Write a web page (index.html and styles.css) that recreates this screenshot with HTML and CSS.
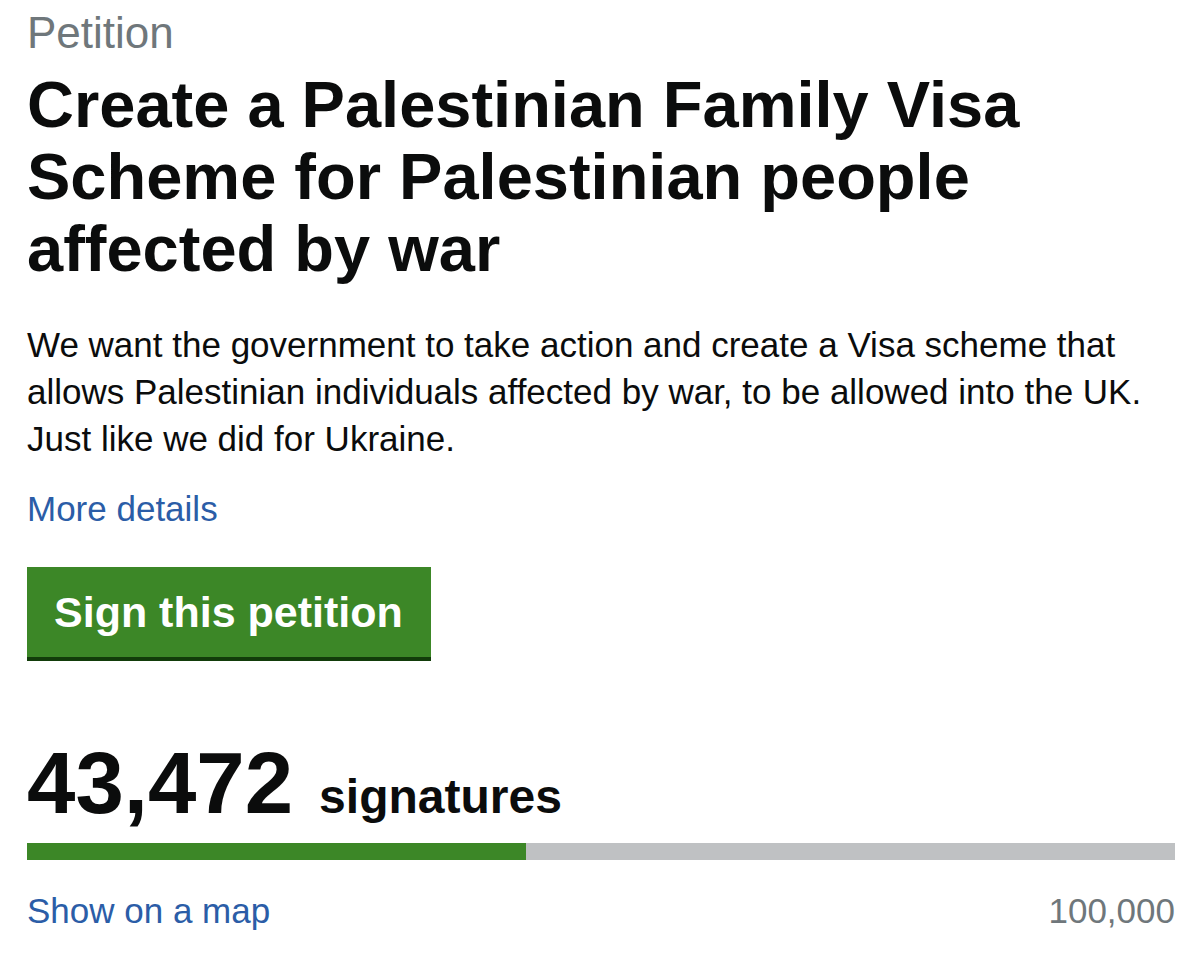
FILE: index.html
```html
<!DOCTYPE html>
<html lang="en">
<head>
<meta charset="utf-8">
<title>Petition</title>
<link rel="stylesheet" href="styles.css">
</head>
<body>
<main class="page">
  <span class="caption">Petition</span>
  <h1 class="title">Create a Palestinian Family Visa Scheme for Palestinian people affected by war</h1>
  <p class="action">We want the government to take action and create a Visa scheme that allows Palestinian individuals affected by war, to be allowed into the UK. Just like we did for Ukraine.</p>
  <a class="link details" href="#">More details</a>
  <div class="button-row"><a class="button" href="#">Sign this petition</a></div>
  <div class="count"><span class="count-number">43,472</span><span class="count-label">signatures</span></div>
  <div class="progress"><div class="progress-fill" style="width: 43.472%"></div></div>
  <div class="progress-foot">
    <a class="link" href="#">Show on a map</a>
    <span class="threshold">100,000</span>
  </div>
</main>
</body>
</html>
```

FILE: styles.css
```css
html, body {
  margin: 0;
  padding: 0;
  background: #ffffff;
}

body {
  font-family: "Liberation Sans", Arial, Helvetica, sans-serif;
  color: #0b0c0c;
}

.page {
  display: flex;
  flex-direction: column;
  align-items: flex-start;
  padding: 8px 25px 0 27px;
}

.caption {
  display: block;
  font-size: 44px;
  line-height: 50px;
  color: #6f777b;
}

.title {
  margin: 11px 0 0;
  font-size: 65px;
  line-height: 72px;
  font-weight: 700;
  max-width: 1060px;
}

.action {
  margin: 36px 0 0;
  font-size: 35px;
  line-height: 47px;
}

.link {
  color: #2b5da7;
  text-decoration: none;
  font-size: 35px;
  line-height: 47px;
}

.details {
  margin-top: 23px;
}

.button-row {
  margin-top: 35px;
}

.button {
  display: inline-block;
  background: #3c8727;
  color: #ffffff;
  font-weight: 700;
  font-size: 43px;
  line-height: 90px;
  padding: 0 28px 0 27px;
  border-bottom: 4px solid #123c0a;
  text-decoration: none;
}

.count {
  display: flex;
  align-items: baseline;
  gap: 26px;
  margin-top: 78px;
  font-weight: 700;
}

.count-number {
  font-size: 87px;
  line-height: 87px;
}

.count-label {
  font-size: 48px;
  line-height: 48px;
}

.progress {
  align-self: stretch;
  margin-top: 17px;
  height: 17px;
  background: #bfc1c3;
}

.progress-fill {
  height: 100%;
  background: #3c8727;
}

.progress-foot {
  align-self: stretch;
  display: flex;
  justify-content: space-between;
  margin-top: 27px;
}

.threshold {
  font-size: 35px;
  line-height: 47px;
  color: #6f777b;
}
```
